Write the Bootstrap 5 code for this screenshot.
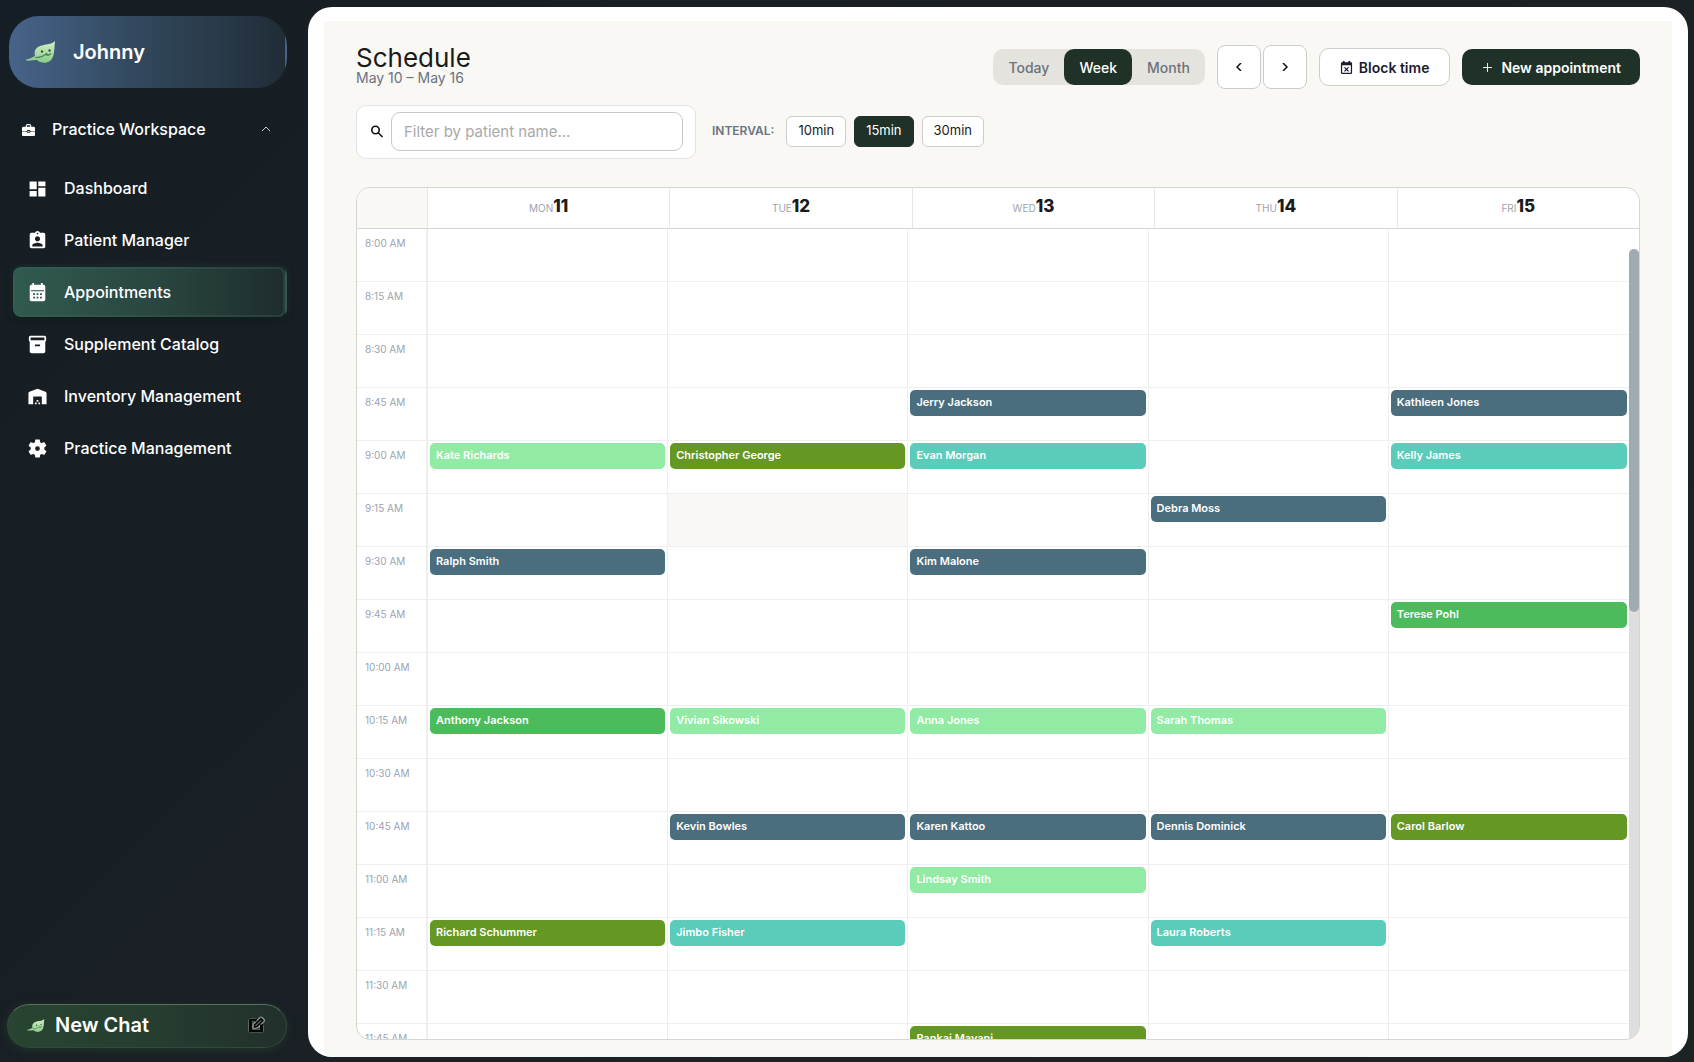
<!DOCTYPE html>
<html lang="en">
<head>
<meta charset="utf-8">
<meta name="viewport" content="width=device-width, initial-scale=1">
<title>Schedule</title>
<link rel="stylesheet" href="https://cdn.jsdelivr.net/npm/bootstrap@5.3.0/dist/css/bootstrap.min.css">
<style>
  :root { --forest: #203127; --cream: #f9f8f4; --line: #efefef; --edge: #d5d5d2; }
  body { font-family: Inter, "Liberation Sans", sans-serif; background: linear-gradient(135deg, #151e24 0%, #1a2025 45%, #1c2423 100%); color: #1a1a1a; }
  svg { flex: none; display: block; }
  button { font-family: inherit; }

  .side-panel { width: 308px; padding: 16px 21px 14px 9px; color: #fff; }
  .brand-card { height: 72px; border-radius: 30px; padding: 0 17px; gap: 17px; font-size: 20px; font-weight: 600; color: #fff;
    background: linear-gradient(90deg, #46638a 0%, #33495f 45%, #202d37 100%); border-right: 2px solid transparent; }
  .side-group { height: 50px; margin-top: 16px; padding: 0 16px 0 13px; gap: 17px; font-size: 16px; font-weight: 500; color: #fff; background: none; border: 0; }
  .side-links { gap: 2px; margin: 9px 0 0 4px; }
  .side-link { height: 50px; border-radius: 8px; padding: 0 15px; gap: 17px; font-size: 16px; font-weight: 500; color: #fff; text-decoration: none; }
  .side-link.current { background: linear-gradient(90deg, #305a50 0%, #29453f 55%, #1d2d2d 100%); border-right: 2px solid transparent;
    box-shadow: 0 2px 6px #0d1514, 0 0 6px rgba(48, 90, 80, .6), inset 0 0 0 2px rgba(60, 100, 90, .35); }
  .chat-btn { height: 44px; margin-left: -2px; border-radius: 22px; border: 1px solid #33493d; border-top-color: #57705f; padding: 0 21px 2px 19px; gap: 10px;
    font-size: 20px; font-weight: 600; color: #fff; background: linear-gradient(90deg, #284531 0%, #263e30 50%, #22302b 100%); box-shadow: 0 2px 8px rgba(38, 66, 48, .6); }

  .main-frame, .main-panel, .main-sheet, .cal-main { min-height: 0; min-width: 0; }
  .main-frame { padding: 7px 6px 5px 0; }
  .main-panel { background: #fff; border-radius: 24px; padding: 14px 16px 0; overflow: hidden; }
  .main-sheet { background: var(--cream); padding: 24px 32px 17px; }
  .page-title { font-size: 26px; line-height: 26px; font-weight: 400; margin: 0; }
  .page-dates { font-size: 14px; line-height: 14px; color: #6b7280; }

  .head-tools { gap: 12px; }
  .seg-group { background: #e4e3dd; border-radius: 10px; }
  .seg-item { height: 36px; padding: 0 15px; border: 0; background: none; border-radius: 10px; font-size: 14px; font-weight: 500; color: #6b7280; }
  .seg-item.active { background: var(--forest); color: #fff; }
  .plain-btn { background: #fff; border: 1px solid #ccccc8; border-radius: 8px; color: #1a1a1a; }
  .step-pair { gap: 2px; }
  .step-btn { width: 44px; height: 44px; }
  .block-btn { height: 38px; border-radius: 10px; padding: 0 20px; gap: 6px; font-size: 14px; font-weight: 600; color: #1a1a2e; }
  .new-btn { height: 36px; border: 0; border-radius: 10px; padding: 0 19px; gap: 8px; font-size: 14px; font-weight: 600; background: var(--forest); color: #fff; }

  .filter-row { gap: 16px; }
  .filter-box { width: 340px; height: 54px; background: #fff; border: 1px solid #e3e3e6; border-radius: 10px; padding: 0 12px 2px 12px; gap: 7px; }
  .filter-box input { height: 39px; min-width: 0; border: 1px solid #c8c8c8; border-radius: 9px; padding: 0 12px; font-size: 15px; background: #fff; }
  .filter-box input::placeholder { color: #a9a9a9; opacity: 1; }
  .gap-set { padding-bottom: 2px; }
  .gap-label { font-size: 12px; font-weight: 600; color: #6b7280; }
  .gap-btn { height: 31px; border-radius: 6px; padding: 0 11px; font-size: 13px; }
  .gap-btn.active { background: var(--forest); border-color: var(--forest); color: #fff; }

  .cal { flex: 1 1 0; min-height: 0; border: 1px solid var(--edge); border-radius: 14px; background: #fff; overflow: hidden; margin-top: 28px; }
  .cal-main { flex: 1 1 0; }
  .cal table { width: 100%; table-layout: fixed; border-collapse: separate; border-spacing: 0; }
  .cal .time-col { width: 71px; }
  .cal-head th { height: 41px; padding: 0 0 2px; text-align: center; vertical-align: middle; border-bottom: 1px solid var(--edge); border-left: 1px solid #e6e6e6; font-weight: 400; line-height: 20px; }
  .cal-head th:first-child { background: var(--cream); border-left: 0; width: 70px; }
  .cal-head .dow { font-size: 10px; color: #9ca3af; }
  .cal-head .num { font-size: 17px; font-weight: 800; }
  .cal-scroll { overflow-y: auto; scrollbar-width: none; min-width: 0; }
  .cal-scroll::-webkit-scrollbar { display: none; }
  .cal-body td, .cal-body th { height: 53px; padding: 2px 2px 0; vertical-align: top; border-bottom: 1px solid var(--line); border-right: 1px solid var(--line); }
  .cal-body th { padding: 8px 0 0 8px; font-size: 10px; line-height: 12px; font-weight: 400; color: #9ca3af; border-right: 2px solid #eeeeec; }
  .cal-body td:last-child { border-right: 0; }
  .cal-body td.off { background: var(--cream); }
  .visit { display: block; height: 26px; border-radius: 5px; padding: 0 6px; font-size: 11px; line-height: 24px; font-weight: 600; color: #fff; text-decoration: none; white-space: nowrap; overflow: hidden; text-overflow: ellipsis; }
  .v-slate { background: #4a6e7e; } .v-mint { background: #91eba5; } .v-olive { background: #659723; }
  .v-teal { background: #5accb9; } .v-green { background: #4cbb5b; }
  .rail { width: 10px; padding-top: 20px; }
  .rail-track { background: #dedede; border-radius: 5px 5px 0 0; }
  .rail-thumb { height: 46%; background: #a0abb1; border-radius: 5px; }
</style>
<script src="https://cdn.jsdelivr.net/npm/bootstrap@5.3.0/dist/js/bootstrap.bundle.min.js"></script>
</head>
<body>
<svg width="0" height="0" class="position-absolute" aria-hidden="true">
  <defs>
    <linearGradient id="leafFill" x1="0" y1="0" x2="0" y2="1"><stop offset="0" stop-color="#d6f0c6"/><stop offset="1" stop-color="#8acb86"/></linearGradient>
    <symbol id="leaf" viewBox="0 0 30 22">
      <path d="M29 0C25 4 19 3 14 5C9 7 8 11 9 15C6 17 3 18 0 18.500L0 19.500C4 20 8 19 11 19C14 22 20 23 24 20C29 16 28 8 29 0Z" fill="url(#leafFill)"/>
      <path d="M9 16.500C15 17 18 15 21 12" fill="none" stroke="#4c8a63" stroke-width="1.200"/>
      <circle cx="16" cy="10.500" r="1.200" fill="#315d44"/><circle cx="23.500" cy="9.500" r="1.200" fill="#315d44"/><path d="M20 13.500Q23 15 25 12.500" fill="none" stroke="#315d44" stroke-width="1.200"/>
    </symbol>
  </defs>
</svg>

<div class="d-flex vh-100">
  <aside class="side-panel d-flex flex-column flex-shrink-0">
    <a href="#" class="brand-card d-flex align-items-center text-decoration-none">
      <svg width="30" height="22"><use href="#leaf"/></svg><span>Johnny</span>
    </a>
    <button type="button" class="side-group d-flex align-items-center" aria-expanded="true">
      <svg width="13" height="13" viewBox="0 0 24 24" fill="#fff"><path fill-rule="evenodd" d="M9 2h6l2 2v3h5a2 2 0 0 1 2 2v6h-8l-2-2h-4l-2 2H0V9a2 2 0 0 1 2-2h5V4zM9 4v3h6V4zM0 16h8l2 2h4l2-2h8V22a2 2 0 0 1-2 2H2a2 2 0 0 1-2-2zM10 15h4v1.500h-4z"/></svg>
      <span>Practice Workspace</span>
      <svg class="ms-auto" width="10" height="6" viewBox="0 0 10 6" fill="none" stroke="#c9ced1" stroke-width="1"><path d="M1 5l4-4 4 4"/></svg>
    </button>
    <nav class="side-links d-flex flex-column">
      <a href="#" class="side-link d-flex align-items-center">
        <svg width="19" height="19" viewBox="0 0 24 24" fill="#fff"><path d="M13 3v6h9V3zm0 19h9V11h-9zM2 22h9v-7H2zM2 13h9V3H2z"/></svg><span>Dashboard</span></a>
      <a href="#" class="side-link d-flex align-items-center">
        <svg width="19" height="19" viewBox="1 1 22 22" fill="#fff"><path d="M19 3h-4.180C14.400 1.840 13.300 1 12 1c-1.300 0-2.400.840-2.820 2H5c-1.100 0-2 .900-2 2v14c0 1.100.900 2 2 2h14c1.100 0 2-.900 2-2V5c0-1.100-.900-2-2-2zm-7 0c.550 0 1 .450 1 1s-.450 1-1 1-1-.450-1-1 .450-1 1-1zm0 4c1.660 0 3 1.340 3 3s-1.340 3-3 3-3-1.340-3-3 1.340-3 3-3zm6 12H6v-1.400c0-2 4-3.100 6-3.100s6 1.100 6 3.100V19z"/></svg><span>Patient Manager</span></a>
      <a href="#" class="side-link current d-flex align-items-center" aria-current="page">
        <svg width="19" height="19" viewBox="1 1 22 22"><path fill="#fff" d="M19 3h-1V1h-2v2H8V1H6v2H5a2 2 0 0 0-2 2v15a2 2 0 0 0 2 2h14a2 2 0 0 0 2-2V5a2 2 0 0 0-2-2z"/><path fill="#294a43" d="M4.500 9.500h15v1h-15zM7 13h2v2H7zm4 0h2v2h-2zm4 0h2v2h-2zM7 17h2v2H7zm4 0h2v2h-2zm4 0h2v2h-2z"/></svg><span>Appointments</span></a>
      <a href="#" class="side-link d-flex align-items-center">
        <svg width="19" height="19" viewBox="1 1 22 22" fill="#fff"><path d="M20 2H4c-1 0-2 .900-2 2v3c0 .720.430 1.340 1 1.700V20c0 1.100 1.100 2 2 2h14c.900 0 2-.900 2-2V8.700c.570-.360 1-.980 1-1.700V4c0-1.100-1-2-2-2zm-5 12H9v-2h6zm5-7H4V4h16z"/></svg><span>Supplement Catalog</span></a>
      <a href="#" class="side-link d-flex align-items-center">
        <svg width="19" height="19" viewBox="1 1 22 22" fill="#fff"><path d="M22.500 21V8.350c0-.820-.500-1.550-1.260-1.860l-8.500-3.200a2 2 0 0 0-1.490 0l-8.500 3.200C2 6.800 1.500 7.540 1.500 8.350V21H7v-9h10v9zM11 19H9v2h2zm2-3h-2v2h2zm2 3h-2v2h2z"/></svg><span>Inventory Management</span></a>
      <a href="#" class="side-link d-flex align-items-center">
        <svg width="19" height="19" viewBox="2 2 20 20" fill="#fff"><path d="M19.140 12.940c.040-.300.060-.610.060-.940 0-.320-.020-.640-.070-.940l2.030-1.580c.180-.140.230-.410.120-.610l-1.920-3.320c-.120-.220-.370-.290-.590-.220l-2.390.960c-.500-.380-1.030-.700-1.620-.940l-.360-2.540c-.040-.240-.240-.410-.480-.410h-3.840c-.240 0-.430.170-.470.410l-.360 2.540c-.590.240-1.130.570-1.620.940l-2.390-.960c-.220-.080-.470 0-.590.220L2.740 8.870c-.120.210-.080.470.120.610l2.030 1.580c-.050.300-.090.630-.090.940s.020.640.070.940l-2.030 1.580c-.180.140-.230.410-.120.610l1.920 3.320c.120.220.370.290.590.220l2.390-.960c.500.380 1.030.700 1.620.940l.360 2.540c.050.240.240.410.480.410h3.840c.240 0 .440-.170.470-.410l.360-2.540c.590-.240 1.130-.560 1.620-.940l2.390.960c.220.080.470 0 .590-.220l1.920-3.320c.120-.220.070-.470-.120-.610zM12 14.500a2.500 2.500 0 1 1 0-5 2.500 2.500 0 0 1 0 5z"/></svg><span>Practice Management</span></a>
    </nav>
    <button type="button" class="chat-btn d-flex align-items-center mt-auto">
      <svg width="18" height="13"><use href="#leaf"/></svg><span>New Chat</span>
      <svg class="ms-auto" width="18" height="18" viewBox="0 0 18 18" fill="none"><path d="M9 4H3.500v11h11V9.500M7.500 11l.500-2.500 6-6 2 2-6 6z" stroke="#8d9a91" stroke-width="4" stroke-linejoin="round"/><path d="M9.500 4H3.500v11h11V8.500" stroke="#050807" stroke-width="3"/><path d="M6.500 12l.700-3.700L14 1.500l3 3-6.800 6.800z" fill="#050807"/><path d="M8.500 10l5.500-5.500" stroke="#9aa69e" stroke-width="1"/></svg>
    </button>
  </aside>

  <main class="main-frame flex-grow-1 d-flex flex-column">
    <div class="main-panel flex-grow-1 d-flex flex-column">
      <div class="main-sheet flex-grow-1 d-flex flex-column">
        <header class="d-flex align-items-start justify-content-between">
          <div>
            <h1 class="page-title">Schedule</h1>
            <div class="page-dates">May 10 – May 16</div>
          </div>
          <div class="head-tools d-flex align-items-center">
            <div class="seg-group d-flex" role="group" aria-label="View">
              <button type="button" class="seg-item">Today</button>
              <button type="button" class="seg-item active">Week</button>
              <button type="button" class="seg-item">Month</button>
            </div>
            <div class="step-pair d-flex">
              <button type="button" class="plain-btn step-btn d-flex align-items-center justify-content-center" aria-label="Previous week"><svg width="6" height="8" viewBox="0 0 6 8" fill="none" stroke="#111" stroke-width="1.500"><path d="M5 0L1 4l4 4"/></svg></button>
              <button type="button" class="plain-btn step-btn d-flex align-items-center justify-content-center" aria-label="Next week"><svg width="6" height="8" viewBox="0 0 6 8" fill="none" stroke="#111" stroke-width="1.500"><path d="M1 0l4 4-4 4"/></svg></button>
            </div>
            <button type="button" class="plain-btn block-btn d-flex align-items-center">
              <svg width="13" height="13" viewBox="2 1 20 21" fill="#1a1a2e"><path d="M19 3h-1V1h-3v2H9V1H6v2H5a2 2 0 0 0-2 2v15a2 2 0 0 0 2 2h14a2 2 0 0 0 2-2V5a2 2 0 0 0-2-2zm0 17H5V8h14zM9.300 18.500l2.700-2.700 2.700 2.700 1.300-1.300-2.700-2.700 2.700-2.700-1.300-1.300-2.700 2.700-2.700-2.700L8 11.800l2.700 2.700L8 17.200z"/></svg>Block time</button>
            <button type="button" class="new-btn d-flex align-items-center">
              <svg width="12" height="12" viewBox="0 0 12 12" stroke="#e8ece9" stroke-width="1"><path d="M6.500 2v9M2 6.500h9"/></svg>New appointment</button>
          </div>
        </header>

        <div class="filter-row d-flex align-items-center flex-wrap mt-3">
          <div class="filter-box d-flex align-items-center">
            <svg width="15" height="15" viewBox="0 0 15 15" fill="none" stroke="#111" stroke-width="1.600"><circle cx="6.500" cy="6" r="3.700"/><path d="M9.200 8.800L13.500 13"/></svg>
            <input class="flex-grow-1" type="text" aria-label="Filter by patient name" placeholder="Filter by patient name...">
          </div>
          <div class="gap-set d-flex align-items-center gap-2">
            <span class="gap-label me-1">INTERVAL:</span>
            <button type="button" class="plain-btn gap-btn">10min</button>
            <button type="button" class="plain-btn gap-btn active">15min</button>
            <button type="button" class="plain-btn gap-btn">30min</button>
          </div>
        </div>

        <section class="cal d-flex flex-column" aria-label="Week calendar">
          <table class="cal-head">
            <thead><tr><th aria-label="Time"></th>
              <th scope="col"><span class="dow">MON</span><span class="num">11</span></th>
              <th scope="col"><span class="dow">TUE</span><span class="num">12</span></th>
              <th scope="col"><span class="dow">WED</span><span class="num">13</span></th>
              <th scope="col"><span class="dow">THU</span><span class="num">14</span></th>
              <th scope="col"><span class="dow">FRI</span><span class="num">15</span></th></tr></thead>
          </table>
          <div class="cal-main d-flex">
            <div class="cal-scroll flex-grow-1">
              <table class="cal-body"><colgroup><col class="time-col"><col><col><col><col><col></colgroup><tbody id="slots"></tbody></table>
            </div>
            <div class="rail d-flex flex-column flex-shrink-0" aria-hidden="true"><div class="rail-track flex-grow-1"><div class="rail-thumb"></div></div></div>
          </div>
        </section>
      </div>
    </div>
  </main>
</div>
<script>
  const visits = {
    "8:45 AM": { 2: ["Jerry Jackson", "slate"], 4: ["Kathleen Jones", "slate"] },
    "9:00 AM": { 0: ["Kate Richards", "mint"], 1: ["Christopher George", "olive"], 2: ["Evan Morgan", "teal"], 4: ["Kelly James", "teal"] },
    "9:15 AM": { 3: ["Debra Moss", "slate"] },
    "9:30 AM": { 0: ["Ralph Smith", "slate"], 2: ["Kim Malone", "slate"] },
    "9:45 AM": { 4: ["Terese Pohl", "green"] },
    "10:15 AM": { 0: ["Anthony Jackson", "green"], 1: ["Vivian Sikowski", "mint"], 2: ["Anna Jones", "mint"], 3: ["Sarah Thomas", "mint"] },
    "10:45 AM": { 1: ["Kevin Bowles", "slate"], 2: ["Karen Kattoo", "slate"], 3: ["Dennis Dominick", "slate"], 4: ["Carol Barlow", "olive"] },
    "11:00 AM": { 2: ["Lindsay Smith", "mint"] },
    "11:15 AM": { 0: ["Richard Schummer", "olive"], 1: ["Jimbo Fisher", "teal"], 3: ["Laura Roberts", "teal"] },
    "11:45 AM": { 2: ["Pankaj Mavani", "olive"] }
  };
  const hovered = { time: "9:15 AM", day: 1 };
  const slots = document.getElementById("slots");
  for (let m = 480; m < 720; m += 15) {
    const time = Math.floor(m / 60) + ":" + String(m % 60).padStart(2, "0") + " AM";
    const row = slots.insertRow();
    const head = document.createElement("th");
    head.scope = "row";
    head.textContent = time;
    row.append(head);
    for (let day = 0; day < 5; day++) {
      const cell = row.insertCell();
      if (time === hovered.time && day === hovered.day) cell.className = "off";
      const visit = visits[time]?.[day];
      if (visit) {
        const link = document.createElement("a");
        link.href = "#";
        link.className = "visit v-" + visit[1];
        link.textContent = visit[0];
        cell.append(link);
      }
    }
  }
</script>
</body>
</html>
